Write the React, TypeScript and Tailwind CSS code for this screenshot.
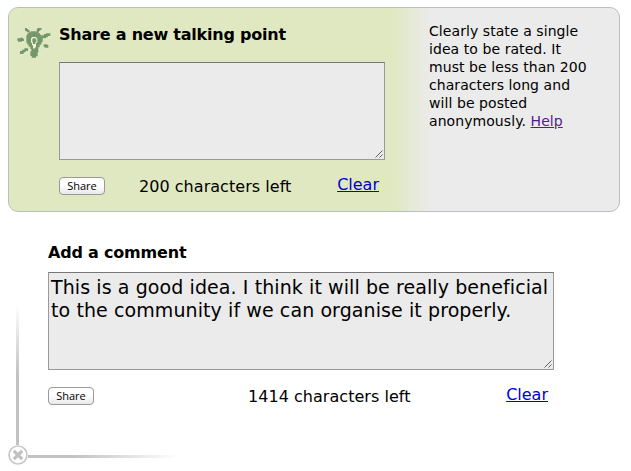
import React from "react";

function Bulb() {
  return (
    <svg className="mt-[18px] ml-[7px] h-[34px] w-[36px] shrink-0" viewBox="48 78 108 102">
      <g fill="none" stroke="#eff3dc" strokeWidth="2">
        <path d="M54 125H70M80 98L88 101M115 99H119L125 90M130 115H139L150 109M133 144H144M63 163H71L84 153M91 160V170M115 158V165" />
      </g>
      <g fill="#75986a">
        <path d="M52 115H60V113H69V116H72V123H66V125H54V122H52ZM75 84H81V87H85V91H89V97H80V93H75ZM112 84H125V89H121V93H117V98H110V88H112ZM126 106H132V102H138V100H151V108H144V112H138V115H126ZM131 133H142V135H145V143H134V140H131ZM60 153H66V149H73V145H84V153H77V157H71V162H60Z" />
        <path d="M86 97H92V94H109V97H114V100H120V104H125V111H128V127H124V134H119V142H115V157H113V169H108V173H95V168H91V154H94V147H91V140H86V134H82V128H79V106H82V100H86Z" />
      </g>
      <path d="M95 111H109V115H112V128H108V144H104V148H99V136H96V128H93V115H95Z" fill="#edf2d8" />
      <path d="M98 115H107V118H109V126H106V132H99V127H97V118H98Z" fill="#75986a" />
      <path d="M96 141L102 150L109 141" fill="none" stroke="#75986a" strokeWidth="3" />
    </svg>
  );
}

function Field({ value, className }: { value: string; className: string }) {
  return (
    <div className={`relative h-[98px] ${className}`}>
      <textarea
        defaultValue={value}
        spellCheck={false}
        className="block h-full w-full resize-none overflow-hidden border border-[#999] border-t-[#777] bg-[#ebebeb] px-[2px] py-[3px] text-[19px] leading-[23px] tracking-[0.09px] text-black outline-none"
      />
      <svg className="absolute right-[2px] bottom-[2px] h-2 w-2" viewBox="0 0 8 8" stroke="#555" strokeWidth="0.9">
        <path d="M0.5 7.5L7.5 0.5M4.5 7.5L7.5 4.5" />
      </svg>
    </div>
  );
}

function Share() {
  return (
    <button className="mt-px h-[18px] w-[46px] shrink-0 rounded-[4px] border border-[#999] bg-linear-to-b from-white from-45% to-[#e9e9e9] text-center font-['Open_Sans',sans-serif] text-[11px] leading-[14px] text-black">
      Share
    </button>
  );
}

export default function App() {
  return (
    <main className="h-[471px] w-[631px] overflow-hidden bg-white pt-[7px] pl-2 font-['DejaVu_Sans',sans-serif] text-black">
      <section className="flex h-[205px] w-[612px] rounded-[10px] border border-[#b9bec5] bg-linear-to-r from-[#e0e8c2] from-[385px] to-[#ebebeb] to-[422px]">
        <Bulb />
        <div className="ml-[7px] w-[326px] shrink-0">
          <h2 className="mt-[16px] h-[22px] text-[16px] leading-[22px] font-bold tracking-[-0.22px] whitespace-nowrap">Share a new talking point</h2>
          <Field value="" className="mt-[16px] w-[326px]" />
          <div className="mt-[16px] flex h-[22px]">
            <Share />
            <span className="ml-[34px] text-[16px] leading-[22px] tracking-[0.04px] whitespace-nowrap">200 characters left</span>
            <a href="#" className="mr-[6px] ml-auto text-[16px] leading-[18px] text-[#0000d0] underline">Clear</a>
          </div>
        </div>
        <p className="mt-[14px] ml-[44px] text-[14px] leading-[18px] tracking-[0.07px] whitespace-nowrap">
          Clearly state a single<br />idea to be rated. It<br />must be less than 200<br />characters long and<br />will be posted<br />anonymously.{" "}
          <a href="#" className="text-[#551a8b] underline">Help</a>
        </p>
      </section>
      <section className="flex h-[259px]">
        <div className="flex w-[40px] shrink-0 flex-col pt-[93px]">
          <div className="ml-[8px] h-[140px] w-[3px] bg-linear-to-b from-white to-[#c2c2c2] to-50%" />
          <div className="flex h-5 items-center">
            <svg className="h-5 w-5 shrink-0" viewBox="0 0 20 20" fill="none">
              <circle cx="10" cy="10" r="9" fill="#fff" stroke="#c8c8c8" strokeWidth="1.7" />
              <path d="M5.8 5.8L14.2 14.2M14.2 5.8L5.8 14.2" stroke="#c0c0c0" strokeWidth="3.2" />
            </svg>
            <div className="mt-[3px] h-[3px] w-[150px] shrink-0 bg-linear-to-r from-[#c2c2c2] from-30% to-white" />
          </div>
        </div>
        <div className="w-[506px]">
          <h2 className="mt-[30px] h-[22px] text-[16px] leading-[22px] font-bold tracking-[-0.2px]">Add a comment</h2>
          <Field value={"This is a good idea. I think it will be really beneficial\nto the community if we can organise it properly."} className="mt-[8px] w-[506px]" />
          <div className="mt-[16px] flex h-[22px]">
            <Share />
            <span className="ml-[154px] text-[16px] leading-[22px] tracking-[0.04px]">1414 characters left</span>
            <a href="#" className="mr-[6px] ml-auto text-[16px] leading-[18px] text-[#0000d0] underline">Clear</a>
          </div>
        </div>
      </section>
    </main>
  );
}
